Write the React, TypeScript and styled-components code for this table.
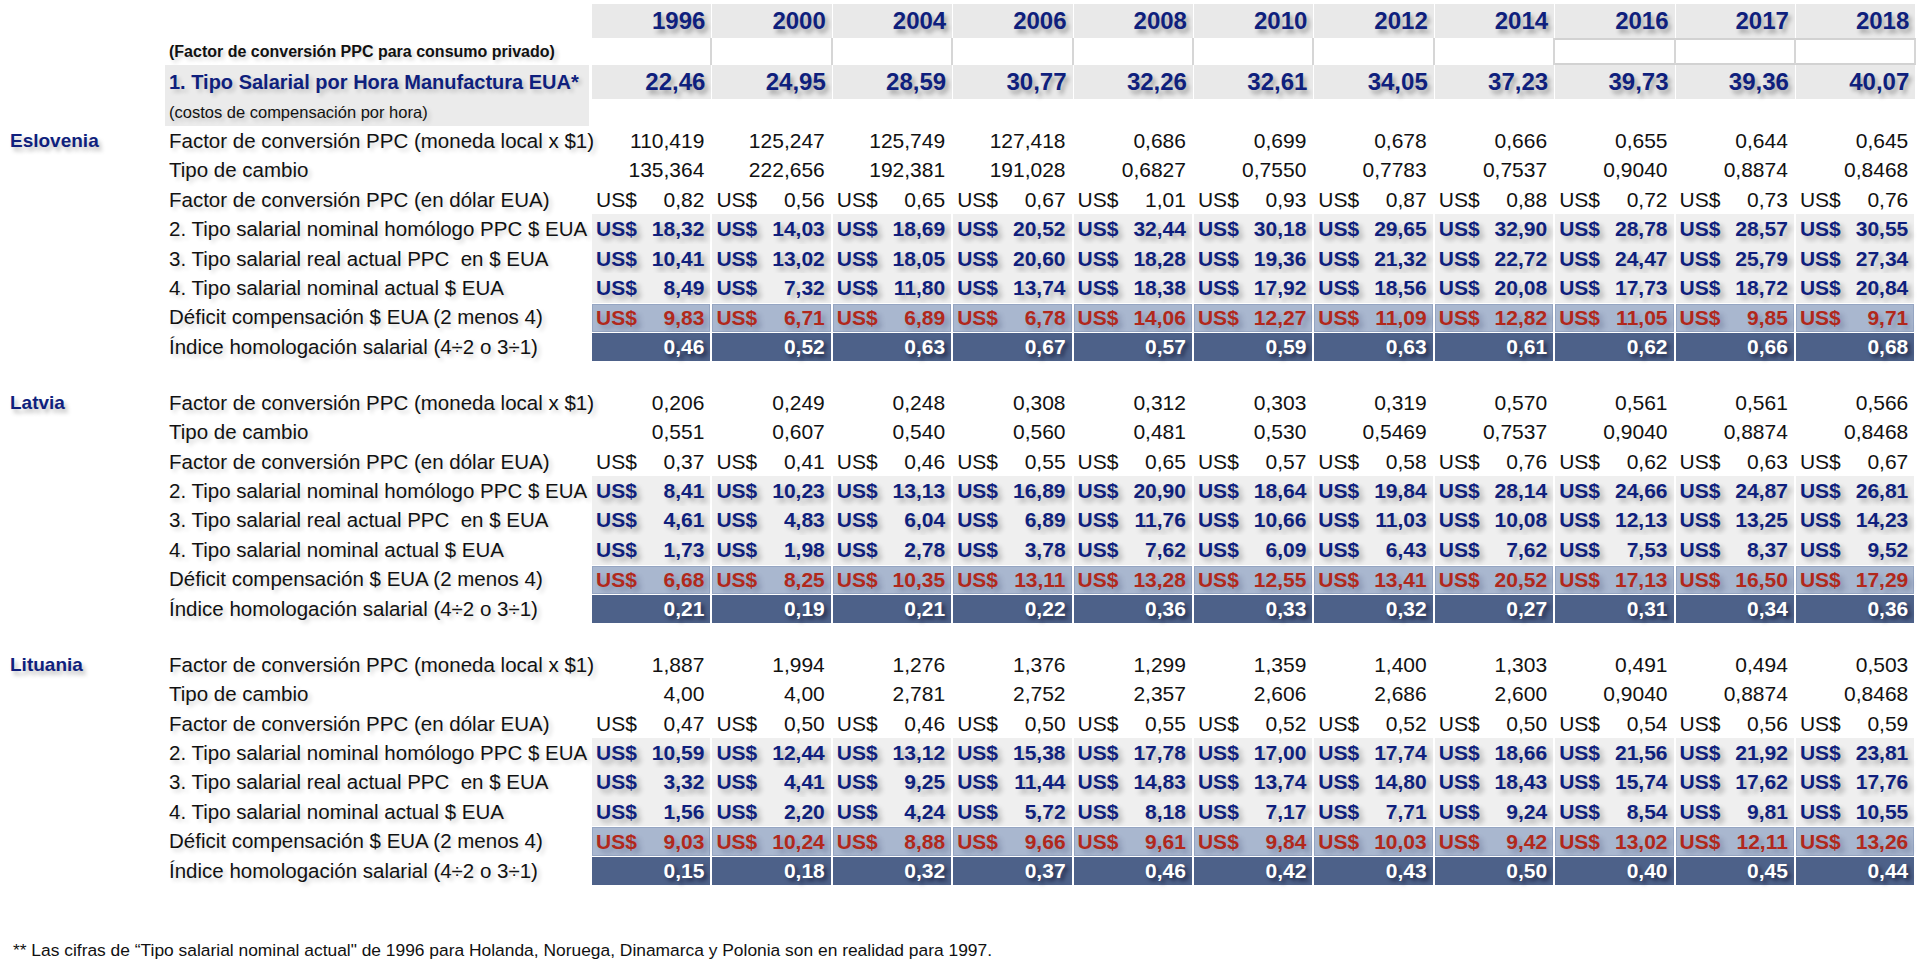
import React from 'react';
import styled, { createGlobalStyle, css } from 'styled-components';

const GlobalStyle = createGlobalStyle`
  html, body {
    margin: 0;
    padding: 0;
    background: #ffffff;
  }
  body {
    font-family: "Liberation Sans", Arial, sans-serif;
    color: #111;
  }
`;

const NAVY = '#0f1f7d';
const RED = '#b1281b';
const COLS = '165px 427px repeat(11, 120.4px)';
const ROW_H = 29.4;

const years = ['1996', '2000', '2004', '2006', '2008', '2010', '2012', '2014', '2016', '2017', '2018'];
const usWage = ['22,46', '24,95', '28,59', '30,77', '32,26', '32,61', '34,05', '37,23', '39,73', '39,36', '40,07'];

type Kind = 'plain' | 'usd' | 'bold' | 'deficit' | 'index';

type Country = {
  name: string;
  rows: string[][];
};

const labels: { text: string; kind: Kind }[] = [
  { text: 'Factor de conversión PPC (moneda local x $1)', kind: 'plain' },
  { text: 'Tipo de cambio', kind: 'plain' },
  { text: 'Factor de conversión PPC (en dólar EUA)', kind: 'usd' },
  { text: '2. Tipo salarial nominal homólogo PPC $ EUA', kind: 'bold' },
  { text: '3. Tipo salarial real actual PPC  en $ EUA', kind: 'bold' },
  { text: '4. Tipo salarial nominal actual $ EUA', kind: 'bold' },
  { text: 'Déficit compensación $ EUA (2 menos 4)', kind: 'deficit' },
  { text: 'Índice homologación salarial (4÷2 o 3÷1)', kind: 'index' },
];

const split = (s: string) => s.split(' ');

const countries: Country[] = [
  {
    name: 'Eslovenia',
    rows: [
      split('110,419 125,247 125,749 127,418 0,686 0,699 0,678 0,666 0,655 0,644 0,645'),
      split('135,364 222,656 192,381 191,028 0,6827 0,7550 0,7783 0,7537 0,9040 0,8874 0,8468'),
      split('0,82 0,56 0,65 0,67 1,01 0,93 0,87 0,88 0,72 0,73 0,76'),
      split('18,32 14,03 18,69 20,52 32,44 30,18 29,65 32,90 28,78 28,57 30,55'),
      split('10,41 13,02 18,05 20,60 18,28 19,36 21,32 22,72 24,47 25,79 27,34'),
      split('8,49 7,32 11,80 13,74 18,38 17,92 18,56 20,08 17,73 18,72 20,84'),
      split('9,83 6,71 6,89 6,78 14,06 12,27 11,09 12,82 11,05 9,85 9,71'),
      split('0,46 0,52 0,63 0,67 0,57 0,59 0,63 0,61 0,62 0,66 0,68'),
    ],
  },
  {
    name: 'Latvia',
    rows: [
      split('0,206 0,249 0,248 0,308 0,312 0,303 0,319 0,570 0,561 0,561 0,566'),
      split('0,551 0,607 0,540 0,560 0,481 0,530 0,5469 0,7537 0,9040 0,8874 0,8468'),
      split('0,37 0,41 0,46 0,55 0,65 0,57 0,58 0,76 0,62 0,63 0,67'),
      split('8,41 10,23 13,13 16,89 20,90 18,64 19,84 28,14 24,66 24,87 26,81'),
      split('4,61 4,83 6,04 6,89 11,76 10,66 11,03 10,08 12,13 13,25 14,23'),
      split('1,73 1,98 2,78 3,78 7,62 6,09 6,43 7,62 7,53 8,37 9,52'),
      split('6,68 8,25 10,35 13,11 13,28 12,55 13,41 20,52 17,13 16,50 17,29'),
      split('0,21 0,19 0,21 0,22 0,36 0,33 0,32 0,27 0,31 0,34 0,36'),
    ],
  },
  {
    name: 'Lituania',
    rows: [
      split('1,887 1,994 1,276 1,376 1,299 1,359 1,400 1,303 0,491 0,494 0,503'),
      split('4,00 4,00 2,781 2,752 2,357 2,606 2,686 2,600 0,9040 0,8874 0,8468'),
      split('0,47 0,50 0,46 0,50 0,55 0,52 0,52 0,50 0,54 0,56 0,59'),
      split('10,59 12,44 13,12 15,38 17,78 17,00 17,74 18,66 21,56 21,92 23,81'),
      split('3,32 4,41 9,25 11,44 14,83 13,74 14,80 18,43 15,74 17,62 17,76'),
      split('1,56 2,20 4,24 5,72 8,18 7,17 7,71 9,24 8,54 9,81 10,55'),
      split('9,03 10,24 8,88 9,66 9,61 9,84 10,03 9,42 13,02 12,11 13,26'),
      split('0,15 0,18 0,32 0,37 0,46 0,42 0,43 0,50 0,40 0,45 0,44'),
    ],
  },
];

const Page = styled.div`
  padding-top: 4px;
  width: 1920px;
`;

const Row = styled.div<{ $h: number }>`
  display: grid;
  grid-template-columns: ${COLS};
  height: ${(p) => p.$h}px;
`;

const Group = styled.section`
  margin-bottom: 26.8px;
`;

const Country = styled.div`
  display: flex;
  align-items: center;
  padding-left: 10px;
  font-weight: bold;
  font-size: 19px;
  color: ${NAVY};
  text-shadow: 3px 4px 4px rgba(0, 0, 0, 0.25);
`;

const Label = styled.div<{ $shade?: boolean; $size?: number; $bold?: boolean; $color?: string }>`
  display: flex;
  align-items: center;
  padding-left: 4px;
  white-space: pre;
  font-size: ${(p) => p.$size ?? 20.5}px;
  font-weight: ${(p) => (p.$bold ? 'bold' : 'normal')};
  color: ${(p) => p.$color ?? '#111'};
  background: ${(p) => (p.$shade ? '#ebebeb' : 'transparent')};
  text-shadow: 3px 3px 4px rgba(0, 0, 0, 0.18);
  margin-right: 3px;
`;

const HeadCell = styled.div`
  display: flex;
  align-items: center;
  justify-content: flex-end;
  padding-right: 6px;
  background: #e9e9e9;
  border-right: 1px solid #fff;
  font-weight: bold;
  font-size: 24px;
  color: ${NAVY};
  text-shadow: 3px 4px 4px rgba(0, 0, 0, 0.3);
`;

const BlankCell = styled.div<{ $boxed?: boolean }>`
  border-right: 2px solid #d6d6d6;
  ${(p) =>
    p.$boxed &&
    css`
      border-top: 2px solid #d2d2d2;
      border-bottom: 2px solid #d2d2d2;
    `}
`;

const cellKinds = {
  plain: css`
    font-weight: normal;
    color: #111;
    text-shadow: none;
  `,
  usd: css`
    font-weight: normal;
    color: #111;
    text-shadow: none;
  `,
  bold: css`
    font-weight: bold;
    color: ${NAVY};
    background: #efefef;
    text-shadow: 4px 4px 5px rgba(0, 0, 0, 0.28);
  `,
  deficit: css`
    font-weight: bold;
    color: ${RED};
    background: #a9b7cf;
    border-top: 1px solid #fff;
    box-shadow: inset 0 0 0 1px #95a5c2;
    text-shadow: 4px 4px 5px rgba(40, 50, 90, 0.3);
  `,
  index: css`
    font-weight: bold;
    color: #fff;
    background: #4d6189;
    border-top: 1px solid #fff;
    text-shadow: 3px 3px 4px rgba(0, 0, 30, 0.6);
  `,
};

const Cell = styled.div<{ $kind: Kind }>`
  display: flex;
  align-items: center;
  justify-content: space-between;
  padding: 0 6px 0 4px;
  font-size: 21px;
  border-right: 2px solid #fff;
  ${(p) => cellKinds[p.$kind]}
`;

const Value = styled.span`
  margin-left: auto;
`;

const Footnote = styled.p`
  margin: 0;
  padding: 28px 0 0 13px;
  font-size: 17.4px;
  color: #111;
`;

const hasUsd = (k: Kind) => k === 'usd' || k === 'bold' || k === 'deficit';

const CountryBlock = ({ c }: { c: Country }) => (
  <Group>
    {labels.map((l, i) => (
      <Row key={l.text} $h={ROW_H}>
        {i === 0 ? <Country>{c.name}</Country> : <div />}
        <Label>{l.text}</Label>
        {c.rows[i].map((v, j) => (
          <Cell key={j} $kind={l.kind}>
            {hasUsd(l.kind) && <span>US$</span>}
            <Value>{v}</Value>
          </Cell>
        ))}
      </Row>
    ))}
  </Group>
);

export default function App() {
  return (
    <Page>
      <GlobalStyle />
      <Row $h={34}>
        <div />
        <div />
        {years.map((y) => (
          <HeadCell key={y}>{y}</HeadCell>
        ))}
      </Row>
      <Row $h={27}>
        <div />
        <Label $bold $size={16}>
          (Factor de conversión PPC para consumo privado)
        </Label>
        {years.map((y, i) => (
          <BlankCell key={y} $boxed={i >= 8} />
        ))}
      </Row>
      <Row $h={34}>
        <div />
        <Label $shade $bold $size={20} $color={NAVY}>
          1. Tipo Salarial por Hora Manufactura EUA*
        </Label>
        {usWage.map((v) => (
          <HeadCell key={v}>{v}</HeadCell>
        ))}
      </Row>
      <Row $h={27.3}>
        <div />
        <Label $shade $size={16.5}>
          (costos de compensación por hora)
        </Label>
      </Row>
      {countries.map((c) => (
        <CountryBlock key={c.name} c={c} />
      ))}
      <Footnote>
        ** Las cifras de “Tipo salarial nominal actual" de 1996 para Holanda, Noruega, Dinamarca y Polonia son en realidad para 1997.
      </Footnote>
    </Page>
  );
}
